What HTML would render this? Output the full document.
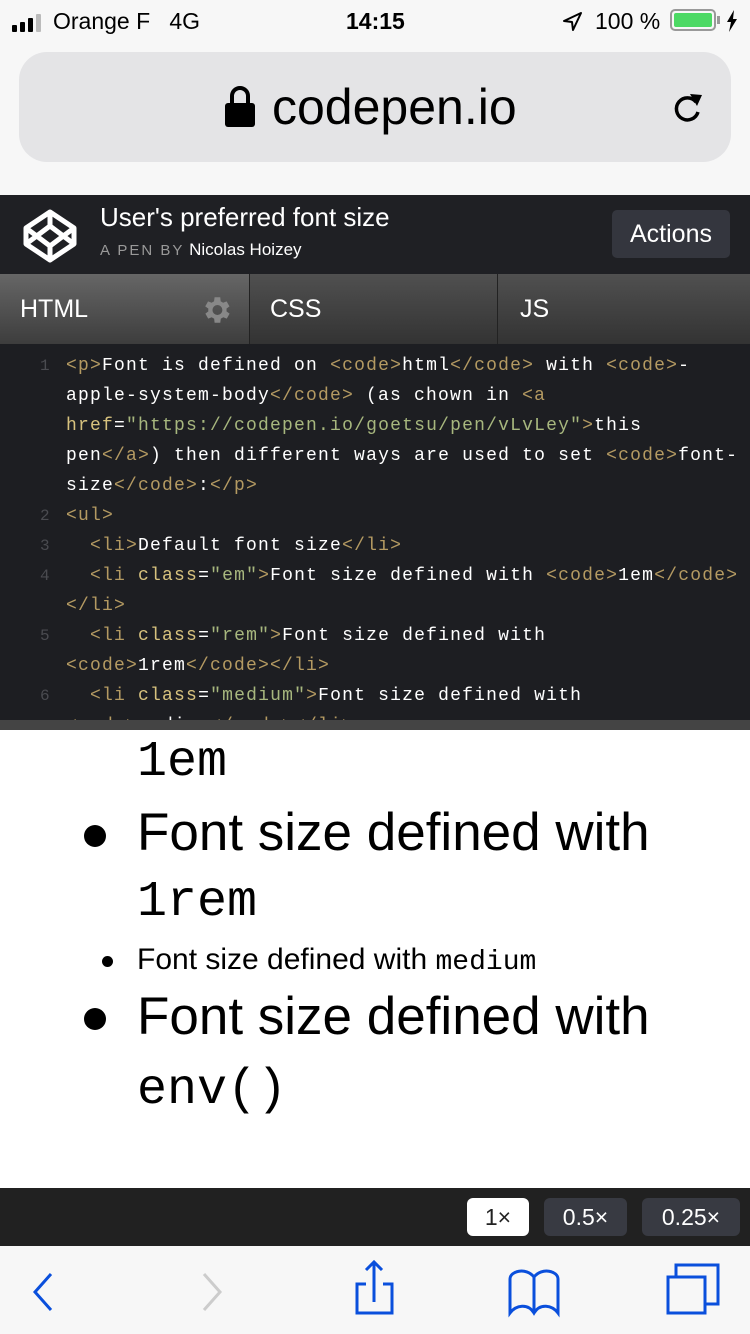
<!DOCTYPE html>
<html><head><meta charset="utf-8"><style>
*{margin:0;padding:0;box-sizing:border-box}
body{width:750px;height:1334px;overflow:hidden;background:#f7f7f7;font-family:"Liberation Sans",sans-serif;position:relative}
.abs{position:absolute}
.code{font-family:"Liberation Mono",monospace;font-size:18px;letter-spacing:1.2px;color:#fff;white-space:pre;line-height:30px}
.t{color:#b49a62}.a{color:#d7c27e}.v{color:#a7b77e}
.ln{color:#4a4b50;position:absolute;left:40px;font-family:"Liberation Mono",monospace;font-size:16px;line-height:30px}
.big{font-size:53px;color:#000}
.mono{font-family:"Liberation Mono",monospace}
</style></head><body>
<!-- status bar -->
<div class="abs" style="left:12px;top:14px;display:flex;align-items:flex-end;gap:3px">
<div style="width:5px;height:7px;background:#000;border-radius:1px"></div>
<div style="width:5px;height:10px;background:#000;border-radius:1px"></div>
<div style="width:5px;height:14px;background:#000;border-radius:1px"></div>
<div style="width:5px;height:18px;background:#bbb;border-radius:1px"></div></div>
<div class="abs" style="left:53px;top:8px;font-size:23px">Orange F&nbsp;&nbsp;&nbsp;4G</div>
<div class="abs" style="left:346px;top:8px;font-size:23px;font-weight:bold">14:15</div>
<svg class="abs" style="left:561px;top:11px" width="22" height="20" viewBox="0 0 22 20"><path d="M20 2L3 10l8 1 1 8z" fill="none" stroke="#000" stroke-width="2" stroke-linejoin="round"/></svg>
<div class="abs" style="left:595px;top:8px;font-size:23px">100 %</div>
<div class="abs" style="left:670px;top:9px;width:46px;height:22px;border:2px solid #999;border-radius:5px;padding:2px"><div style="width:100%;height:100%;background:#4cd964;border-radius:2px"></div></div>
<div class="abs" style="left:717px;top:16px;width:3px;height:8px;background:#999"></div>
<svg class="abs" style="left:726px;top:10px" width="12" height="22" viewBox="0 0 12 22"><path d="M8 0L1 12h4l-2 10 8-13H7z" fill="#000"/></svg>
<!-- url bar -->
<div class="abs" style="left:19px;top:52px;width:712px;height:110px;background:#e4e4e6;border-radius:28px"></div>
<svg class="abs" style="left:224px;top:84px" width="32" height="44" viewBox="0 0 32 44"><path d="M8 20V12a8 8 0 0 1 16 0v8" fill="none" stroke="#000" stroke-width="4"/><rect x="1" y="19" width="30" height="24" rx="3" fill="#000"/></svg>
<div class="abs" style="left:272px;top:78px;font-size:50px;color:#000">codepen.io</div>
<svg class="abs" style="left:670px;top:90px" width="36" height="36" viewBox="0 0 36 36"><path d="M26 12A11 11 0 1 0 28 22" fill="none" stroke="#000" stroke-width="3.5"/><path d="M20 4l12 1-5 11z" fill="#000"/></svg>
<!-- codepen header -->
<div class="abs" style="left:0;top:195px;width:750px;height:80px;background:#1f2024"></div>
<svg class="abs" style="left:22px;top:208px" width="56" height="56" viewBox="0 0 56 56"><g fill="none" stroke="#fff" stroke-width="5" stroke-linejoin="round"><path d="M28 4L52 20v16L28 52 4 36V20z"/><path d="M28 4v14M28 38v14M4 20l24 18 24-18M4 36l24-18 24 18"/></g></svg>
<div class="abs" style="left:100px;top:202px;font-size:26px;color:#fff">User's preferred font size</div>
<div class="abs" style="left:100px;top:240px;font-size:17px;color:#fff"><span style="color:#999;letter-spacing:2px;font-size:15px">A PEN BY</span> Nicolas Hoizey</div>
<div class="abs" style="left:612px;top:210px;width:118px;height:48px;background:#34363e;border-radius:5px;color:#fff;font-size:25px;text-align:center;line-height:48px">Actions</div>
<!-- tabs -->
<div class="abs" style="left:0;top:274px;width:750px;height:70px;background:linear-gradient(#505050,#333)"></div>
<div class="abs" style="left:0;top:274px;width:249px;height:70px;background:linear-gradient(#666,#3d3d3d)"></div>
<div class="abs" style="left:249px;top:274px;width:1px;height:70px;background:#222"></div>
<div class="abs" style="left:497px;top:274px;width:1px;height:70px;background:#222"></div>
<div class="abs" style="left:20px;top:295px;font-size:25px;color:#fff">HTML</div>
<svg class="abs" style="left:199px;top:293px" width="34" height="34" viewBox="0 0 24 24"><path fill="#888" d="M19.4 13a7.5 7.5 0 0 0 0-2l2.1-1.6-2-3.5-2.5 1a7 7 0 0 0-1.7-1L15 3h-4l-.4 2.9a7 7 0 0 0-1.7 1l-2.5-1-2 3.5L6.6 11a7.5 7.5 0 0 0 0 2l-2.1 1.6 2 3.5 2.5-1a7 7 0 0 0 1.7 1L11 21h4l.4-2.9a7 7 0 0 0 1.7-1l2.5 1 2-3.5zM13 15.5a3.5 3.5 0 1 1 0-7 3.5 3.5 0 0 1 0 7z"/></svg>
<div class="abs" style="left:270px;top:295px;font-size:25px;color:#fff">CSS</div>
<div class="abs" style="left:520px;top:295px;font-size:25px;color:#fff">JS</div>
<!-- code -->
<div class="abs" style="left:0;top:344px;width:750px;height:376px;background:#1d1e22;overflow:hidden">
<span class="ln" style="top:7px">1</span><span class="ln" style="top:157px">2</span><span class="ln" style="top:187px">3</span><span class="ln" style="top:217px">4</span><span class="ln" style="top:277px">5</span><span class="ln" style="top:337px">6</span>
<div class="code abs" style="left:66px;top:7px"><span class="t">&lt;p&gt;</span>Font is defined on <span class="t">&lt;code&gt;</span>html<span class="t">&lt;/code&gt;</span> with <span class="t">&lt;code&gt;</span>-
apple-system-body<span class="t">&lt;/code&gt;</span> (as chown in <span class="t">&lt;a</span>
<span class="a">href</span>=<span class="v">"https://codepen.io/goetsu/pen/vLvLey"</span><span class="t">&gt;</span>this
pen<span class="t">&lt;/a&gt;</span>) then different ways are used to set <span class="t">&lt;code&gt;</span>font-
size<span class="t">&lt;/code&gt;</span>:<span class="t">&lt;/p&gt;</span>
<span class="t">&lt;ul&gt;</span>
  <span class="t">&lt;li&gt;</span>Default font size<span class="t">&lt;/li&gt;</span>
  <span class="t">&lt;li</span> <span class="a">class</span>=<span class="v">"em"</span><span class="t">&gt;</span>Font size defined with <span class="t">&lt;code&gt;</span>1em<span class="t">&lt;/code&gt;</span>
<span class="t">&lt;/li&gt;</span>
  <span class="t">&lt;li</span> <span class="a">class</span>=<span class="v">"rem"</span><span class="t">&gt;</span>Font size defined with
<span class="t">&lt;code&gt;</span>1rem<span class="t">&lt;/code&gt;&lt;/li&gt;</span>
  <span class="t">&lt;li</span> <span class="a">class</span>=<span class="v">"medium"</span><span class="t">&gt;</span>Font size defined with
<span class="t">&lt;code&gt;</span>medium<span class="t">&lt;/code&gt;&lt;/li&gt;</span></div></div>
<div class="abs" style="left:0;top:720px;width:750px;height:10px;background:#444"></div>
<!-- preview -->
<div class="abs" style="left:0;top:730px;width:750px;height:458px;background:#fff;overflow:hidden">
<div class="abs mono big" style="left:137px;top:4px;font-size:50px">1em</div>
<div class="abs" style="left:84px;top:95px;width:22px;height:22px;border-radius:50%;background:#000"></div>
<div class="abs big" style="left:137px;top:72px">Font size defined with</div>
<div class="abs mono big" style="left:137px;top:144px;font-size:50px">1rem</div>
<div class="abs" style="left:102px;top:226px;width:11px;height:11px;border-radius:50%;background:#000"></div>
<div class="abs" style="left:137px;top:213px;font-size:30px;color:#000">Font size defined with <span class="mono" style="font-size:28px">medium</span></div>
<div class="abs" style="left:84px;top:278px;width:22px;height:22px;border-radius:50%;background:#000"></div>
<div class="abs big" style="left:137px;top:256px">Font size defined with</div>
<div class="abs mono big" style="left:137px;top:332px;font-size:50px">env()</div>
</div>
<!-- zoom bar -->
<div class="abs" style="left:0;top:1188px;width:750px;height:58px;background:#212121"></div>
<div class="abs" style="left:467px;top:1198px;width:62px;height:38px;background:#fff;border-radius:6px;font-size:23px;text-align:center;line-height:38px;color:#222">1×</div>
<div class="abs" style="left:544px;top:1198px;width:83px;height:38px;background:#383a42;border-radius:6px;font-size:23px;text-align:center;line-height:38px;color:#fff">0.5×</div>
<div class="abs" style="left:642px;top:1198px;width:98px;height:38px;background:#383a42;border-radius:6px;font-size:23px;text-align:center;line-height:38px;color:#fff">0.25×</div>
<!-- toolbar -->
<svg class="abs" style="left:0;top:1246px" width="750" height="88" viewBox="0 0 750 88">
<g fill="none" stroke-width="3">
<path d="M51 28L35 46l16 18" stroke="#0a4fdc"/>
<path d="M204 28l16 18-16 18" stroke="#ccc"/>
<g stroke="#0a4fdc"><path d="M366 38h-9v29h35V38h-9"/><path d="M374 16v40M366 24l8-8 8 8"/>
<path d="M534 31c-8-10-24-6-24 2v34c6-8 18-10 24 0c6-10 18-8 24 0V33c0-8-16-12-24-2zM534 31v36"/>
<rect x="668" y="31" width="37" height="36"/><path d="M676 31V19h42v39h-13"/></g></g></svg>
</body></html>
